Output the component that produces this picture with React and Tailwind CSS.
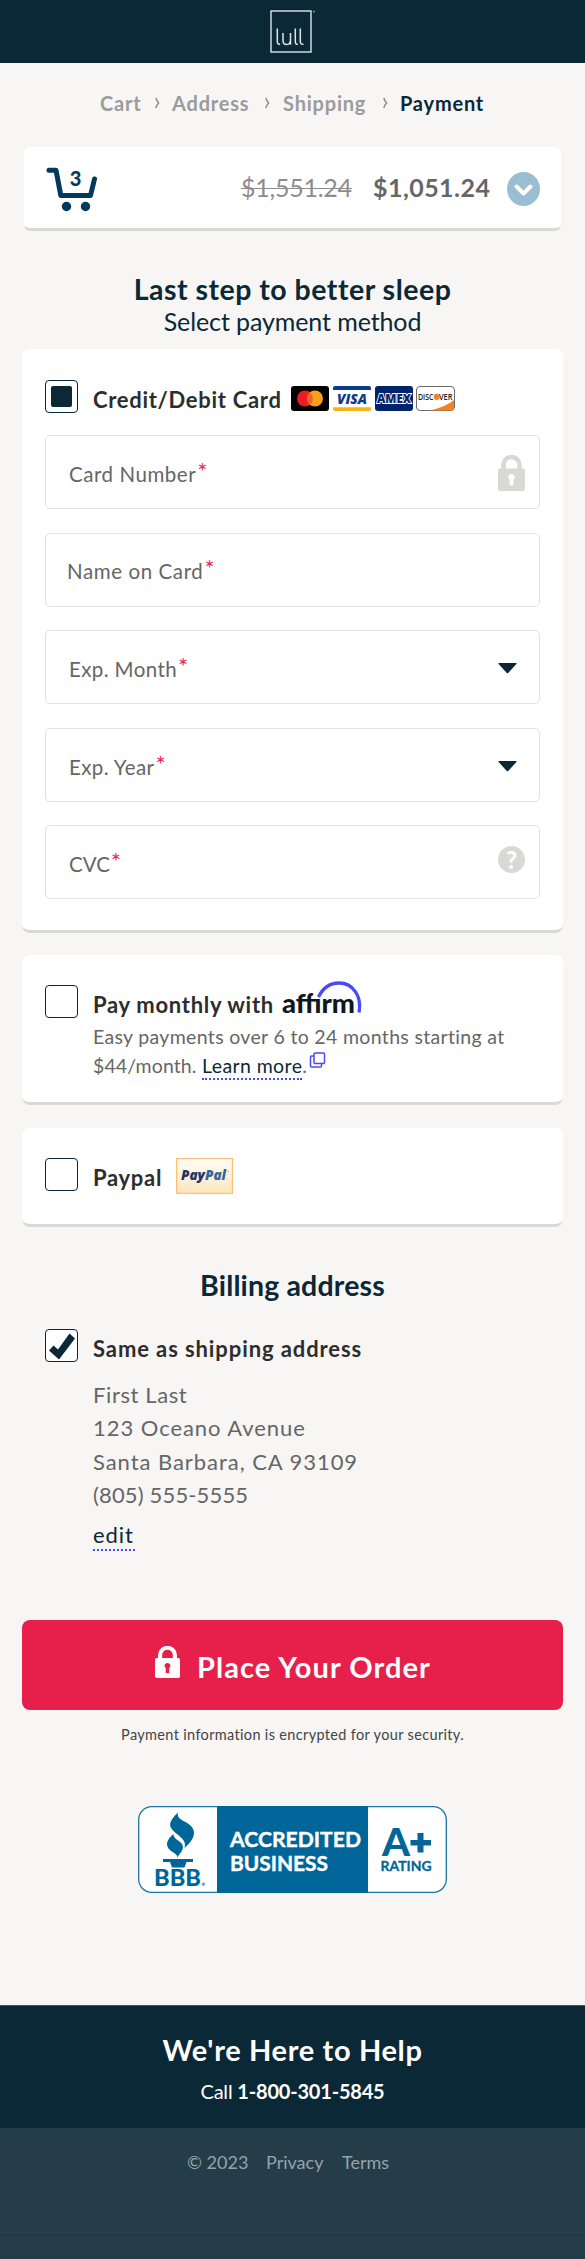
import React from "react";

function LullLogo() {
  return (
    <svg className="block" width="46" height="44" viewBox="0 0 46 44" fill="none" stroke="#dfe5e8">
      <rect x="1" y="1" width="40" height="41" strokeWidth="1.4" />
      <g strokeWidth="1.5">
        <path d="M7.3 18.5V31.5q0 3 2.8 2.8" />
        <path d="M13 23V30.5q0 4 3.5 4t4-4V23M20.5 30v4.8" />
        <path d="M25.3 18.5V31.5q0 3 2.4 2.8" />
        <path d="M30.3 18.5V31.5q0 3 3.2 2.8" />
      </g>
      <circle cx="44" cy="1.6" r=".6" strokeWidth=".6" />
    </svg>
  );
}

function Sep() {
  return (
    <svg className="mt-1.5 block" width="5" height="12" viewBox="0 0 5 12" fill="none" stroke="#8d8d8d" strokeWidth="1.5">
      <path d="M.8 1q.9 3 2.800 5Q1.700 8 .8 11" />
    </svg>
  );
}

function CartIcon() {
  return (
    <svg className="block" width="52" height="44" viewBox="0 0 52 44" overflow="visible">
      <path d="M3 3.300H10L14.800 28.500H44.500L48.500 12" fill="none" stroke="#04395e" strokeWidth="5" strokeLinecap="round" strokeLinejoin="round" />
      <circle cx="20.500" cy="39.500" r="4.700" fill="#04395e" />
      <circle cx="39.500" cy="39.500" r="4.700" fill="#04395e" />
      <text x="29.500" y="18.700" fontFamily="Lato, sans-serif" fontWeight="900" fontSize="20" textAnchor="middle" fill="#04395e">3</text>
    </svg>
  );
}

function Lock({ className, hole, width, height }) {
  return (
    <svg className={className} width={width} height={height} viewBox="0 0 27 36" preserveAspectRatio="none" fill="currentColor">
      <path d="M5.500 15V10a8 8 0 0 1 16 0v5" fill="none" stroke="currentColor" strokeWidth="4.500" />
      <rect x="0" y="13.500" width="27" height="22.500" rx="2" />
      <path fill={hole} d="M13.500 19a3.200 3.200 0 0 1 1.900 5.800V30.500H11.600V24.800A3.200 3.200 0 0 1 13.500 19z" />
    </svg>
  );
}

function Box({ children }) {
  return (
    <span className="flex h-[33px] w-[33px] shrink-0 items-center justify-center rounded-[4px] border-[1.5px] border-[#0b2836] bg-white">
      {children}
    </span>
  );
}

function Cards() {
  return (
    <svg className="ml-[9px] mt-[6px] block" width="164" height="25" viewBox="0 0 164 25" fontFamily="Open Sans, sans-serif">
      <rect width="38" height="25" rx="3" fill="#000" />
      <circle cx="14" cy="12.500" r="8" fill="#eb1c26" />
      <circle cx="24" cy="12.500" r="8" fill="#f99f1b" />
      <path d="M19 6.300a8 8 0 0 1 0 12.400a8 8 0 0 1 0-12.400z" fill="#f26122" />
      <rect x="42" width="38" height="25" rx="2" fill="#fff" />
      <path d="M42 4V2a2 2 0 0 1 2-2H78a2 2 0 0 1 2 2V4z" fill="#0e3a8c" />
      <path d="M42 21.300V23a2 2 0 0 0 2 2H78a2 2 0 0 0 2-2V21.300z" fill="#fcb116" />
      <text x="46" y="17.800" fontSize="14" fontWeight="800" fontStyle="italic" textLength="30" lengthAdjust="spacingAndGlyphs" fill="#10398a">VISA</text>
      <rect x="84" width="38" height="25" rx="3" fill="#00246b" />
      <text x="86" y="17.300" fontSize="12.500" fontWeight="800" textLength="34" lengthAdjust="spacingAndGlyphs" fill="#00246b" stroke="#fff" strokeWidth="1.800" paintOrder="stroke">AMEX</text>
      <rect x="125.500" y=".5" width="38" height="24" rx="3.500" fill="#fff" stroke="#6b6b6b" />
      <path d="M138 24.500Q154 21.500 163 14V21.500a3 3 0 0 1-3 3z" fill="#f58220" />
      <circle cx="145.700" cy="10.800" r="3.100" fill="#f58220" />
      <text x="127" y="13.800" fontSize="8.300" fontWeight="600" textLength="15.500" lengthAdjust="spacingAndGlyphs" fill="#222">DISC</text>
      <text x="148" y="13.800" fontSize="8.300" fontWeight="600" textLength="13.500" lengthAdjust="spacingAndGlyphs" fill="#222">VER</text>
    </svg>
  );
}

function Affirm() {
  return (
    <svg className="block" width="80" height="38" viewBox="0 0 80 38">
      <text x="0" y="31.500" fontFamily="Lato, sans-serif" fontWeight="900" fontSize="27" textLength="73" lengthAdjust="spacingAndGlyphs" fill="#0f1822">affırm</text>
      <path d="M36.500 16C41 7 48 2 57 2C71 2 80 15 77 31.500" fill="none" stroke="#4a4af4" strokeWidth="3.300" />
    </svg>
  );
}

function PaypalMark() {
  return (
    <svg className="ml-[13px] block" width="57" height="36" viewBox="0 0 57 36">
      <defs>
        <linearGradient id="cream" x1="0" y1="0" x2="0" y2="1">
          <stop offset="0" stopColor="#fffdf8" />
          <stop offset="1" stopColor="#fde5ba" />
        </linearGradient>
      </defs>
      <rect x=".6" y=".6" width="55.800" height="34.800" fill="url(#cream)" stroke="#fdbf78" strokeWidth="1.200" />
      <text x="5" y="22" fontFamily="Open Sans, sans-serif" fontWeight="800" fontStyle="italic" fontSize="13.500" textLength="45" lengthAdjust="spacingAndGlyphs">
        <tspan fill="#1b3768">Pay</tspan><tspan fill="#2f6699">Pal</tspan>
      </text>
      <text x="50.500" y="15" fontFamily="Lato, sans-serif" fontSize="3.500" fill="#55708c">™</text>
    </svg>
  );
}

function BbbSeal() {
  return (
    <svg className="mx-auto mt-[61px] block" width="309" height="87" viewBox="0 0 309 87" fontFamily="Lato, sans-serif" fontWeight="900" fill="#006699">
      <rect x=".7" y=".7" width="307.600" height="85.600" rx="13" fill="#fff" stroke="#1b76a3" strokeWidth="1.300" />
      <rect x="79" width="151" height="87" />
      <path d="M40 6.500C31 15 30 20 35.500 25C42 31 49 34 46.500 42C55 35 59 27 53.500 20.500C48 14.500 38 14 40 6.500z" />
      <path d="M35.500 28C28 34 27 40 32.500 44.500C36 47.500 39 48 39.500 51.500C42 46 47 44 44 38C41.500 34 35 33 35.500 28z" />
      <path d="M25 53H55V56H48.500L46.500 61.500H34L32 56H25z" />
      <text x="16" y="80.300" fontSize="22.500" textLength="47" lengthAdjust="spacingAndGlyphs">BBB</text>
      <text x="63.500" y="80" fontSize="4.500">®</text>
      <g fill="#fff" fontWeight="700" fontSize="20.500">
        <text x="92" y="41" textLength="131" lengthAdjust="spacingAndGlyphs" stroke="#fff" strokeWidth=".4">ACCREDITED</text>
        <text x="92" y="65" textLength="98" lengthAdjust="spacingAndGlyphs" stroke="#fff" strokeWidth=".4">BUSINESS</text>
      </g>
      <text x="244" y="50" fontSize="38.500" textLength="28" lengthAdjust="spacingAndGlyphs">A</text>
      <path d="M279.500 27H285.500V34H293V39.500H285.500V46.500H279.500V39.500H272.500V34H279.500z" />
      <text x="242.500" y="65" fontSize="13.800" textLength="51" lengthAdjust="spacingAndGlyphs" fontWeight="700" stroke="#006699" strokeWidth=".3">RATING</text>
    </svg>
  );
}

function Field({ label, labelClass = "tracking-[.4px]", lift, children }) {
  return (
    <div className={"flex h-[74px] items-start justify-between rounded-[5px] border-[1.5px] border-[#e2e2e2] bg-white pt-[25px] text-[#666] " + (lift ? "pl-[21px]" : "pl-[23px]")}>
      <div className={"flex whitespace-nowrap text-[20.500px] leading-6 " + (lift ? "" : "pt-px")}>
        <span className={labelClass}>{label}</span>
        <span className="-mt-[3px] ml-px text-[24px] text-[#ee2558]">*</span>
      </div>
      {children}
    </div>
  );
}

function Caret() {
  return (
    <svg className="mr-[22px] mt-[7px] block" width="19" height="11" viewBox="0 0 19 11" fill="#0b2836">
      <path d="M.8 0H18.200Q19 .4 18.400 1L10.200 10Q9.500 10.600 8.800 10L.6 1Q0 .3.800 0z" />
    </svg>
  );
}

const card = "mx-[22px] rounded-[8px] border-b-[3px] border-[#d8d8d6] bg-white px-[23px] pt-[30px] ";

export default function App() {
  return (
    <div className="min-h-[2259px] w-[585px] overflow-hidden bg-[#f7f6f4] font-[Lato,sans-serif] text-[#0b2836]">
      <header className="flex h-[63px] bg-[#0b2836] pl-[270px] pt-[10px]">
        <LullLogo />
      </header>

      <nav className="ml-[100px] mt-7 flex h-6 whitespace-nowrap text-[20px] font-bold leading-6 tracking-[.8px] text-[#9b9b9b]">
        <span className="w-[55px]">Cart</span>
        <Sep />
        <span className="ml-[12px] w-[93px]">Address</span>
        <Sep />
        <span className="ml-[13px] w-[100px]">Shipping</span>
        <Sep />
        <span className="ml-[12px] text-[#0b2836]">Payment</span>
      </nav>

      <section className="mx-6 mt-8 flex h-[84px] items-start rounded-[6px] border-b-[3px] border-[#d8d8d6] bg-white pl-[22px]">
        <div className="mt-[20px]"><CartIcon /></div>
        <div className="ml-auto mt-[24px] flex whitespace-nowrap text-[25px] leading-[32px]">
          <span className="w-[132px] text-[#8d8d8d]"><span className="tracking-[-.25px] line-through decoration-1">$1,551.24</span></span>
          <span className="w-[134px] font-bold tracking-[.45px] text-[#666]">$1,051.24</span>
        </div>
        <svg className="mr-[21px] mt-[25px] block" width="33" height="34" viewBox="0 0 33 34">
          <ellipse cx="16.500" cy="17" rx="16.500" ry="17" fill="#9bbdd2" />
          <path d="M9.500 14.500L16.500 21.500L23.500 14.500" fill="none" stroke="#fff" strokeWidth="4" strokeLinecap="round" strokeLinejoin="round" />
        </svg>
      </section>

      <h1 className="mt-[41px] text-center text-[28.500px] font-bold leading-[34px] tracking-[.5px]">Last step to better sleep</h1>
      <p className="mb-[13px] text-center text-[25px] leading-[30px] tracking-[-.1px]">Select payment method</p>

      <section className={card + "h-[584px]"}>
        <div className="flex h-[34px] pt-px">
          <Box><span className="h-[21px] w-[21px] rounded-[2px] bg-[#0b2836]" /></Box>
          <span className="ml-[15px] mt-[7px] w-[189px] whitespace-nowrap text-[22px] font-bold leading-[26px] tracking-[.7px] text-[#2d2d2d]">Credit/Debit Card</span>
          <Cards />
        </div>
        <div className="mt-[22px] flex flex-col gap-[23.5px]">
          <Field label="Card Number" labelClass="tracking-[.55px]">
            <Lock className="-mt-[6px] mr-[14px] block text-[#d8d8d6]" hole="#fff" width="27" height="36" />
          </Field>
          <Field label="Name on Card" labelClass="tracking-[.6px]" lift />
          <Field label="Exp. Month"><Caret /></Field>
          <Field label="Exp. Year"><Caret /></Field>
          <Field label="CVC" labelClass="tracking-normal">
            <span className="-mt-[5px] mr-[14px] flex h-[27px] w-[27px] items-center justify-center rounded-full bg-[#d8d8d6] text-[24px] font-black leading-none text-white">?</span>
          </Field>
        </div>
      </section>

      <section className={card + "mt-[22px] flex h-[150px]"}>
        <Box />
        <div className="ml-[15px] whitespace-nowrap">
          <div className="mt-[7px] flex h-[26px] text-[22px] font-bold leading-[26px] tracking-[.7px] text-[#2d2d2d]">
            <span className="w-[189px]">Pay monthly with</span>
            <div className="-mt-[11px] tracking-normal"><Affirm /></div>
          </div>
          <p className="mt-[4px] text-[19.500px] leading-[29px] tracking-[.33px] text-[#666]">Easy payments over 6 to 24 months starting at</p>
          <p className="flex h-[29px] text-[19.500px] leading-[29px] text-[#666]">
            <span className="w-[109px] tracking-[.1px]">$44/month.</span>
            <a className="h-[29px] border-b-2 border-dotted border-[#4a4af4] tracking-[.4px] text-[#0b2836]">Learn more</a>
            <span>.</span>
            <svg className="ml-[2px] mt-[1px] block" width="17" height="16" viewBox="0 0 17 16" fill="none" stroke="#4a4af4" strokeWidth="1.500">
              <rect x="5" y="1" width="10.500" height="10.500" rx="1" />
              <path d="M5 4H2.500a1 1 0 0 0-1 1V14a1 1 0 0 0 1 1H11.500a1 1 0 0 0 1-1V11.500" />
            </svg>
          </p>
        </div>
      </section>

      <section className={card + "mt-[23px] flex h-[99px]"}>
        <Box />
        <span className="ml-[15px] mt-[7px] w-[70px] whitespace-nowrap text-[22px] font-bold leading-[26px] tracking-[.7px] text-[#2d2d2d]">Paypal</span>
        <PaypalMark />
      </section>

      <section className="h-[393px] px-[45px] pt-[41px]">
        <h2 className="text-center text-[28.500px] font-bold leading-[34px] tracking-[.15px]">Billing address</h2>
        <div className="mt-[27px] flex">
          <Box>
            <svg width="28" height="28" viewBox="0 0 28 28" fill="#0b2836">
              <path d="M1 18.500L5.500 13.500L10 17.500L21.500 1.500L27 6.500L11 27.500z" />
            </svg>
          </Box>
          <span className="ml-[15px] mt-[7px] whitespace-nowrap text-[22px] font-bold leading-[26px] tracking-[.9px] text-[#2d2d2d]">Same as shipping address</span>
        </div>
        <address className="ml-[48px] mt-[16px] whitespace-nowrap text-[22px] not-italic leading-[33.300px] tracking-[.95px] text-[#666]">
          <div className="tracking-[.6px]">First Last</div>
          <div>123 Oceano Avenue</div>
          <div>Santa Barbara, CA 93109</div>
          <div className="tracking-[.15px]">(805) 555-5555</div>
        </address>
        <a className="ml-[48px] mt-[11px] block h-[29px] w-[42px] border-b-2 border-dotted border-[#4a4af4] text-[22px] leading-[26px] tracking-[.9px]">edit</a>
      </section>

      <button className="mx-[22px] flex h-[90px] w-[541px] items-start rounded-[8px] bg-[#e6204b] pl-[133px] text-white">
        <Lock className="mt-[26px] block" hole="#e6204b" width="25" height="32" />
        <span className="ml-[17px] mt-[30px] whitespace-nowrap text-[29px] font-bold leading-[34px] tracking-[1.05px]">Place Your Order</span>
      </button>
      <p className="mt-[15px] text-center text-[14.500px] leading-5 tracking-[.34px] text-[#444]">Payment information is encrypted for your security.</p>

      <BbbSeal />

      <footer className="mt-[112px] whitespace-nowrap">
        <div className="h-[123px] border-t border-[#415661] bg-[#0b2836] pt-[27px] text-center text-white">
          <h3 className="text-[29px] font-bold leading-[34px] tracking-[.65px]">We're Here to Help</h3>
          <p className="mt-[12px] text-[20px] leading-6 tracking-[-.2px]">Call <b className="font-bold">1-800-301-5845</b></p>
        </div>
        <div className="flex h-[108px] border-b border-[#1e3540] bg-[#243d49] pl-[187px] pt-[23px] text-[18px] leading-[22px] text-[#96a3aa]">
          <span className="w-[79px]">© 2023</span>
          <span className="w-[76px]">Privacy</span>
          <span>Terms</span>
        </div>
        <div className="h-[23px] bg-[#243d49]" />
      </footer>
    </div>
  );
}
